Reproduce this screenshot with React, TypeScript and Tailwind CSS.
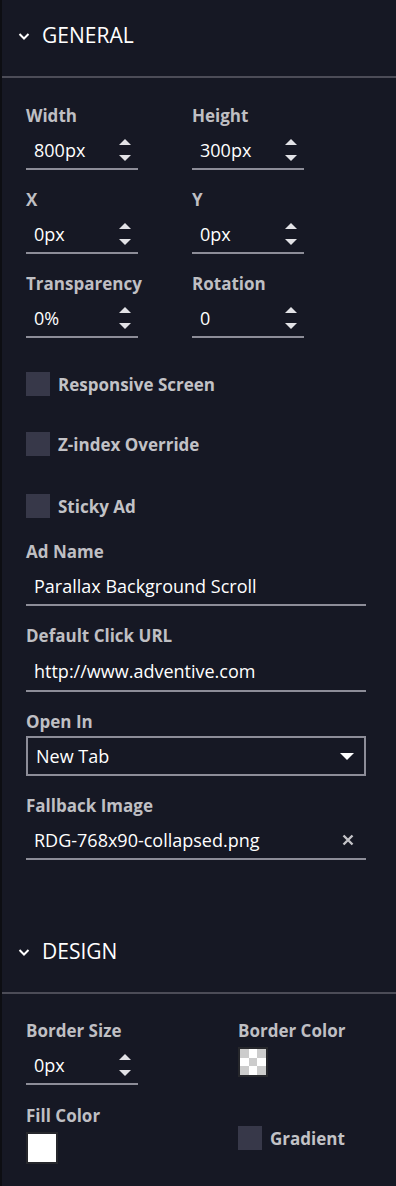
import React from "react";

const font = { fontFamily: '"Open Sans", "Noto Sans", sans-serif' };

function Chevron() {
  return (
    <svg width="12" height="8" viewBox="0 0 12 8" className="text-white">
      <path d="M1.5 2 L6 6.5 L10.5 2" fill="none" stroke="currentColor" strokeWidth="2" />
    </svg>
  );
}

function Spinner() {
  return (
    <div className="flex flex-col items-center gap-[10px]">
      <svg width="12" height="6" viewBox="0 0 12 6">
        <path d="M6 0 L12 6 L0 6 Z" fill="#e2e2e6" />
      </svg>
      <svg width="12" height="6" viewBox="0 0 12 6">
        <path d="M0 0 L12 0 L6 6 Z" fill="#e2e2e6" />
      </svg>
    </div>
  );
}

function SectionHeader({ title }: { title: string }) {
  return (
    <>
      <div className="flex h-[76px] items-center gap-[12px] pb-[4px] pl-[16px]">
        <Chevron />
        <span className="text-[21px] text-white">{title}</span>
      </div>
      <div className="h-[2px] bg-[#4c4c57]" />
    </>
  );
}

function Label({ children }: { children: React.ReactNode }) {
  return <div className="h-[22px] text-[17px] font-bold leading-[22px] text-[#bfbfc3]">{children}</div>;
}

function NumberField({ label, value }: { label: string; value: string }) {
  return (
    <div className="w-[112px]">
      <Label>{label}</Label>
      <div className="mt-[5px] flex h-[38px] items-center justify-between border-b-2 border-[#8d8d98] pl-[8px] pr-[7px]">
        <span className="text-[18px] text-white">{value}</span>
        <Spinner />
      </div>
    </div>
  );
}

function TextField({ label, value, clear, tall }: { label: string; value: string; clear?: boolean; tall?: boolean }) {
  return (
    <div>
      <Label>{label}</Label>
      <div
        className={`${tall ? "mt-[6px] h-[39px]" : "mt-[5px] h-[38px]"} flex items-center justify-between border-b-2 border-[#8d8d98] pl-[8px] pr-[12px]`}
      >
        <span className="text-[18px] text-white">{value}</span>
        {clear && (
          <svg width="12" height="12" viewBox="0 0 12 12">
            <path d="M1.5 1.5 L10.5 10.5 M10.5 1.5 L1.5 10.5" stroke="#c4c4c8" strokeWidth="2.4" />
          </svg>
        )}
      </div>
    </div>
  );
}

function Checkbox({ label }: { label: string }) {
  return (
    <div className="flex h-[24px] items-center gap-[8px]">
      <div className="h-[24px] w-[24px] bg-[#373849]" />
      <span className="pt-[2px] text-[17px] font-bold leading-[24px] text-[#c2c2c6]">{label}</span>
    </div>
  );
}

export default function App() {
  return (
    <div style={font} className="flex min-h-[1186px] w-[396px] bg-[#161824]">
      <div className="w-[2px] bg-[#0d0e13]" />
      <div className="flex-1">
        <SectionHeader title="GENERAL" />
        <div className="flex flex-col pl-[24px] pr-[30px] pt-[27px]">
          <div className="flex flex-col gap-[19px]">
            <div className="flex gap-[54px]">
              <NumberField label="Width" value="800px" />
              <NumberField label="Height" value="300px" />
            </div>
            <div className="flex gap-[54px]">
              <NumberField label="X" value="0px" />
              <NumberField label="Y" value="0px" />
            </div>
            <div className="flex gap-[54px]">
              <NumberField label="Transparency" value="0%" />
              <NumberField label="Rotation" value="0" />
            </div>
          </div>
          <div className="mt-[34px] flex flex-col">
            <Checkbox label="Responsive Screen" />
            <div className="mt-[36px]">
              <Checkbox label="Z-index Override" />
            </div>
            <div className="mt-[38px]">
              <Checkbox label="Sticky Ad" />
            </div>
          </div>
          <div className="mt-[23px] flex flex-col gap-[19px]">
            <TextField label="Ad Name" value="Parallax Background Scroll" />
            <TextField label="Default Click URL" value="http://www.adventive.com" tall />
            <div>
              <Label>Open In</Label>
              <div className="mt-[3px] flex h-[40px] items-center justify-between border-2 border-[#8d8d98] pl-[8px] pr-[10px]">
                <span className="text-[18px] text-white">New Tab</span>
                <svg width="14" height="7" viewBox="0 0 14 7">
                  <path d="M0 0 L14 0 L7 7 Z" fill="#ffffff" />
                </svg>
              </div>
            </div>
            <TextField label="Fallback Image" value="RDG-768x90-collapsed.png" clear />
          </div>
        </div>
        <div className="mt-[56px]">
          <SectionHeader title="DESIGN" />
        </div>
        <div className="grid grid-cols-[212px_1fr] px-[24px] pt-[26px]">
          <NumberField label="Border Size" value="0px" />
          <div>
            <Label>Border Color</Label>
            <div className="mt-[5px] grid h-[30px] w-[30px] grid-cols-3 grid-rows-3 border-2 border-[#26272c]">
              <div className="bg-[#cccccc]" />
              <div className="bg-white" />
              <div className="bg-[#cccccc]" />
              <div className="bg-white" />
              <div className="bg-[#cccccc]" />
              <div className="bg-white" />
              <div className="bg-[#cccccc]" />
              <div className="bg-white" />
              <div className="bg-[#cccccc]" />
            </div>
          </div>
          <div className="mt-[20px]">
            <Label>Fill Color</Label>
            <div className="mt-[5px] h-[32px] w-[32px] border-2 border-[#26272c] bg-white" />
          </div>
          <div className="mt-[41px]">
            <Checkbox label="Gradient" />
          </div>
        </div>
      </div>
    </div>
  );
}
